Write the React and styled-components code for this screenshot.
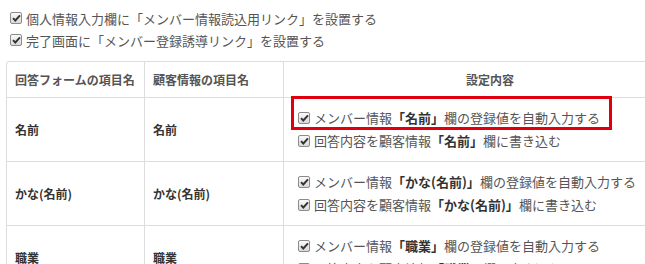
import styled, { createGlobalStyle } from 'styled-components';

const GlobalStyle = createGlobalStyle`
    html, body {
        margin: 0;
        padding: 0;
        overflow: hidden;
        background: #fff;
    }
    body {
        font-family: "Noto Sans CJK JP", "Noto Sans", sans-serif;
        font-size: 13px;
        color: #555;
    }
`

const Page = styled.div`
    padding: 7px 0 0 6px;
    width: 720px;
`

const Options = styled.div`
    display: flex;
    flex-direction: column;
    padding-left: 4px;
    margin-bottom: 10px;
`

const CheckLine = styled.label`
    display: flex;
    align-items: center;
    gap: 4px;
    width: fit-content;
    height: ${props => props.$height || 22}px;
    white-space: nowrap;
    color: #555;
    position: relative;

    ${props => props.$highlight && `
        &::after {
            content: '';
            position: absolute;
            top: -10px;
            bottom: -1px;
            left: -7px;
            right: -12px;
            border: 3px solid #e0000d;
            pointer-events: none;
        }
    `}
`

const Box = styled.span`
    display: inline-flex;
    align-items: center;
    justify-content: center;
    box-sizing: border-box;
    width: 12px;
    height: 12px;
    border: 1px solid #8c8c8c;
    border-radius: 2px;
    background: linear-gradient(#fafafa, #d9d9d9);
    flex: none;
`

const Strong = styled.b`
    font-weight: 700;
    color: #333;
`

const Table = styled.table`
    border-collapse: separate;
    border-spacing: 0;
    width: 691px;
    border-top: 1px solid #ddd;
    border-left: 1px solid #ddd;
    border-top-left-radius: 4px;
    table-layout: fixed;
`

const Th = styled.th`
    box-sizing: border-box;
    height: 36px;
    padding: 0 8px;
    font-size: 12px;
    font-weight: 700;
    color: #555;
    text-align: ${props => props.$center ? 'center' : 'left'};
    border-bottom: 1px solid #ddd;
    border-right: 1px solid #ddd;
    width: ${props => props.$width ? props.$width + 'px' : 'auto'};
    white-space: nowrap;
`

const NameCell = styled.td`
    height: 63px;
    padding: 0 8px;
    font-size: 12px;
    font-weight: 700;
    color: #333;
    border-bottom: 1px solid #ddd;
    border-right: 1px solid #ddd;
    vertical-align: middle;
`

const SettingCell = styled.td`
    padding: 8px 0 0 14px;
    border-bottom: 1px solid #ddd;
    vertical-align: top;
`

const Check = () => (
    <Box>
        <svg width="9" height="8" viewBox="0 0 9 8">
            <path d="M1 4.2 L3.3 6.5 L8 1.3" fill="none" stroke="#333" strokeWidth="1.9" />
        </svg>
    </Box>
)

const rows = [
    { form: '名前', customer: '名前', field: '名前', highlight: true },
    { form: 'かな(名前)', customer: 'かな(名前)', field: 'かな(名前)' },
    { form: '職業', customer: '職業', field: '職業' },
]

const App = () => {
    return (
        <Page>
            <GlobalStyle />
            <Options>
                <CheckLine><Check />個人情報入力欄に「メンバー情報読込用リンク」を設置する</CheckLine>
                <CheckLine><Check />完了画面に「メンバー登録誘導リンク」を設置する</CheckLine>
            </Options>
            <Table>
                <thead>
                    <tr>
                        <Th $width={138}>回答フォームの項目名</Th>
                        <Th $width={139}>顧客情報の項目名</Th>
                        <Th $center>設定内容</Th>
                    </tr>
                </thead>
                <tbody>
                    {rows.map(row => (
                        <tr key={row.form}>
                            <NameCell>{row.form}</NameCell>
                            <NameCell>{row.customer}</NameCell>
                            <SettingCell>
                                <CheckLine $height={23} $highlight={row.highlight}>
                                    <Check />
                                    <span>メンバー情報<Strong>「{row.field}」</Strong>欄の登録値を自動入力する</span>
                                </CheckLine>
                                <CheckLine $height={23}>
                                    <Check />
                                    <span>回答内容を顧客情報<Strong>「{row.field}」</Strong>欄に書き込む</span>
                                </CheckLine>
                            </SettingCell>
                        </tr>
                    ))}
                </tbody>
            </Table>
        </Page>
    )
}

export default App;
